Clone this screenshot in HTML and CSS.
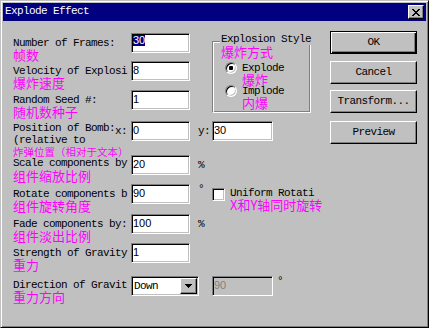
FILE: index.html
```html
<!DOCTYPE html>
<html lang="zh">
<head>
    <meta charset="UTF-8">
    <title>Explode Effect</title>
    <link rel="stylesheet" href="styles.css">
</head>
<body>

    <div class="window">
        <div class="titlebar">
            <span class="title">Explode Effect</span>
            <span class="close">
                <svg width="8" height="7" viewBox="0 0 8 7" shape-rendering="crispEdges"><path fill="#000" d="M0 0h2v1H0zM6 0h2v1H6zM1 1h2v1H1zM5 1h2v1H5zM2 2h4v1H2zM3 3h2v1H3zM2 4h4v1H2zM1 5h2v1H1zM5 5h2v1H5zM0 6h2v1H0zM6 6h2v1H6z"/></svg>
            </span>
        </div>

        <div class="dialog">
            <div class="main">

                <!-- Les trois premières lignes et le groupe de style -->
                <div class="top">
                    <div class="top-rows">
                        <div class="row r1">
                            <div class="label"><div class="en">Number of Frames:</div><div class="zh">帧数</div></div>
                            <div class="edit focus"><span class="sel">30</span></div>
                        </div>
                        <div class="row r2">
                            <div class="label"><div class="en">Velocity of Explosi</div><div class="zh">爆炸速度</div></div>
                            <div class="edit">8</div>
                        </div>
                        <div class="row r3">
                            <div class="label"><div class="en">Random Seed #:</div><div class="zh">随机数种子</div></div>
                            <div class="edit">1</div>
                        </div>
                    </div>

                    <div class="group">
                        <div class="group-title">Explosion Style</div>
                        <div class="zh group-zh">爆炸方式</div>
                        <div class="radio-item first">
                            <span class="radio checked"></span>
                            <div class="radio-label"><div class="en">Explode</div><div class="zh">爆炸</div></div>
                        </div>
                        <div class="radio-item">
                            <span class="radio"></span>
                            <div class="radio-label"><div class="en">Implode</div><div class="zh">内爆</div></div>
                        </div>
                    </div>
                </div>

                <div class="row r4">
                    <div class="label narrow">
                        <div class="en">Position of Bomb:</div>
                        <div class="en">(relative to</div>
                        <div class="zh small">炸弹位置（相对于文本）</div>
                    </div>
                    <div class="coord">x:</div>
                    <div class="edit">0</div>
                    <div class="coord unit">y:</div>
                    <div class="edit wide">30</div>
                </div>

                <div class="row r5">
                    <div class="label"><div class="en">Scale components by</div><div class="zh">组件缩放比例</div></div>
                    <div class="edit">20</div>
                    <div class="unit">%</div>
                </div>

                <div class="row r6">
                    <div class="label"><div class="en">Rotate components b</div><div class="zh">组件旋转角度</div></div>
                    <div class="edit">90</div>
                    <div class="unit deg">°</div>
                    <span class="check"></span>
                    <div class="check-label"><div class="en">Uniform Rotati</div><div class="zh">X和Y轴同时旋转</div></div>
                </div>

                <div class="row r7">
                    <div class="label"><div class="en">Fade components by:</div><div class="zh">组件淡出比例</div></div>
                    <div class="edit">100</div>
                    <div class="unit">%</div>
                </div>

                <div class="row r8">
                    <div class="label"><div class="en">Strength of Gravity</div><div class="zh">重力</div></div>
                    <div class="edit">1</div>
                </div>

                <div class="row r9">
                    <div class="label"><div class="en">Direction of Gravit</div><div class="zh">重力方向</div></div>
                    <div class="combo">
                        <span class="combo-text">Down</span>
                        <span class="combo-btn">
                            <svg width="7" height="4" viewBox="0 0 7 4" shape-rendering="crispEdges"><path fill="#000" d="M0 0h7v1H0zM1 1h5v1H1zM2 2h3v1H2zM3 3h1v1H3z"/></svg>
                        </span>
                    </div>
                    <div class="edit wide disabled">90</div>
                    <div class="unit small-deg">°</div>
                </div>

            </div>

            <div class="buttons">
                <div class="btn default">OK</div>
                <div class="btn b-cancel">Cancel</div>
                <div class="btn b-transform">Transform...</div>
                <div class="btn b-preview">Preview</div>
            </div>
        </div>
    </div>

</body>
</html>
```

FILE: styles.css
```css
body {
    margin: 0;
    background-color: #c0c0c0;
}
.window {
    width: 429px;
    height: 328px;
    box-sizing: border-box;
    padding: 2px;
    background-color: #c0c0c0;
    border: 1px solid;
    border-color: #c0c0c0 #000 #000 #c0c0c0;
    box-shadow: inset 1px 1px #fff, inset -1px -1px #808080;
    font-family: "Liberation Mono", monospace;
    font-size: 11px;
    letter-spacing: -0.6px;
    line-height: 11px;
    color: #000;
}
.titlebar {
    height: 18px;
    box-sizing: border-box;
    display: flex;
    align-items: flex-start;
    padding: 3px 2px 0 2px;
    background-color: #000080;
    color: #fff;
}
.title {
    flex: 1;
}
.close {
    width: 16px;
    height: 14px;
    margin-top: -1px;
    box-sizing: border-box;
    display: flex;
    align-items: center;
    justify-content: center;
    background-color: #c0c0c0;
    border: 1px solid;
    border-color: #fff #000 #000 #fff;
    box-shadow: inset -1px -1px #808080;
}
.dialog {
    display: flex;
    padding: 10px 0 0 10px;
}
.main {
    width: 317px;
    padding-top: 2px;
}
.top {
    display: flex;
}
.top-rows {
    width: 199px;
}
.row {
    display: flex;
    align-items: flex-start;
}
.r1 { height: 28px; }
.r2 { height: 29px; }
.r3 { height: 31px; }
.r4 { height: 34px; }
.r5 { height: 29px; }
.r6 { height: 30px; }
.r7 { height: 29px; }
.r8 { height: 33px; }
.r9 { height: 30px; }

.label {
    width: 118px;
    padding-top: 5px;
    box-sizing: border-box;
}
.label .en {
    white-space: nowrap;
}
.label.narrow {
    width: 102px;
    padding-top: 1px;
}
.label.narrow .en {
    line-height: 12px;
}
.r5 .label {
    padding-top: 3px;
}
.r5 .zh {
    margin-top: 1px;
}
.r9 .label {
    padding-top: 4px;
}
.zh {
    font-family: "Noto Sans CJK SC", sans-serif;
    font-size: 13px;
    line-height: 12px;
    letter-spacing: 0;
    color: #ff00ff;
    white-space: nowrap;
}
.zh.small {
    font-size: 10.5px;
    line-height: 11px;
}

/* Champs de saisie */
.edit {
    width: 59px;
    height: 20px;
    box-sizing: border-box;
    padding: 3px 0 0 1px;
    background-color: #fff;
    border: 1px solid;
    border-color: #808080 #fff #fff #808080;
    box-shadow: inset 1px 1px #000, inset -1px -1px #c0c0c0;
    font-family: "Liberation Sans", sans-serif;
    font-size: 11px;
    letter-spacing: 0;
    line-height: 11px;
}
.edit.focus {
    padding-top: 1px;
}
.edit.wide {
    width: 61px;
}
.edit.disabled {
    background-color: #c0c0c0;
    color: #808080;
}
.sel {
    display: inline-block;
    height: 11px;
    background-color: #000080;
    color: #fff;
}
.coord {
    width: 16px;
    padding-top: 5px;
}
.unit {
    width: 14px;
    margin-left: 8px;
    padding-top: 5px;
}
.unit.deg {
    padding-top: 0;
}
.unit.small-deg {
    margin-left: 4px;
    padding-top: 0;
}

/* Case à cocher */
.check {
    width: 13px;
    height: 13px;
    margin-top: 4px;
    box-sizing: border-box;
    background-color: #fff;
    border: 1px solid;
    border-color: #808080 #fff #fff #808080;
    box-shadow: inset 1px 1px #000, inset -1px -1px #c0c0c0;
}
.check-label {
    margin: 4px 0 0 5px;
}
.check-label .en {
    white-space: nowrap;
}

/* Liste déroulante */
.combo {
    width: 68px;
    height: 20px;
    box-sizing: border-box;
    padding: 1px;
    display: flex;
    background-color: #fff;
    border: 1px solid;
    border-color: #808080 #fff #fff #808080;
    box-shadow: inset 1px 1px #000, inset -1px -1px #c0c0c0;
}
.combo-text {
    flex: 1;
    padding: 3px 0 0 1px;
}
.combo-btn {
    width: 17px;
    height: 16px;
    box-sizing: border-box;
    display: flex;
    align-items: center;
    justify-content: center;
    background-color: #c0c0c0;
    border: 1px solid;
    border-color: #fff #000 #000 #fff;
    box-shadow: inset -1px -1px #808080;
}
.r9 .edit.disabled {
    margin-left: 13px;
}

/* Groupe Explosion Style */
.group {
    width: 99px;
    height: 72px;
    margin-top: 8px;
    box-sizing: border-box;
    border: 1px solid;
    border-color: #808080 #fff #fff #808080;
    box-shadow: inset 1px 1px #fff, inset -1px -1px #808080;
}
.group-title {
    width: max-content;
    margin: -8px 0 0 7px;
    padding: 0 1px;
    background-color: #c0c0c0;
}
.group-zh {
    margin: 1px 0 0 8px;
}
.radio-item {
    display: flex;
    margin-left: 12px;
}
.radio-item.first {
    margin-top: 4px;
}
.radio-item .zh {
    line-height: 11px;
}
.radio {
    width: 12px;
    height: 12px;
    box-sizing: border-box;
    display: flex;
    align-items: center;
    justify-content: center;
    border-radius: 50%;
    background-color: #fff;
    border: 1px solid;
    border-color: #808080 #fff #fff #808080;
    box-shadow: inset 1px 1px #000, inset -1px -1px #c0c0c0;
}
.radio.checked::after {
    content: "";
    width: 4px;
    height: 4px;
    border-radius: 1px;
    background-color: #000;
}
.radio-label {
    margin-left: 5px;
    padding-top: 1px;
}

/* Boutons */
.buttons {
    width: 87px;
    display: flex;
    flex-direction: column;
}
.btn {
    height: 23px;
    box-sizing: border-box;
    display: flex;
    align-items: center;
    justify-content: center;
    background-color: #c0c0c0;
    border: 1px solid;
    border-color: #fff #000 #000 #fff;
    box-shadow: inset -1px -1px #808080;
}
.btn.default {
    border-color: #000;
    box-shadow: inset 1px 1px #fff, inset -1px -1px #000, inset -2px -2px #808080;
}
.b-cancel { margin-top: 7px; }
.b-transform { margin-top: 6px; }
.b-preview { margin-top: 8px; }
```
